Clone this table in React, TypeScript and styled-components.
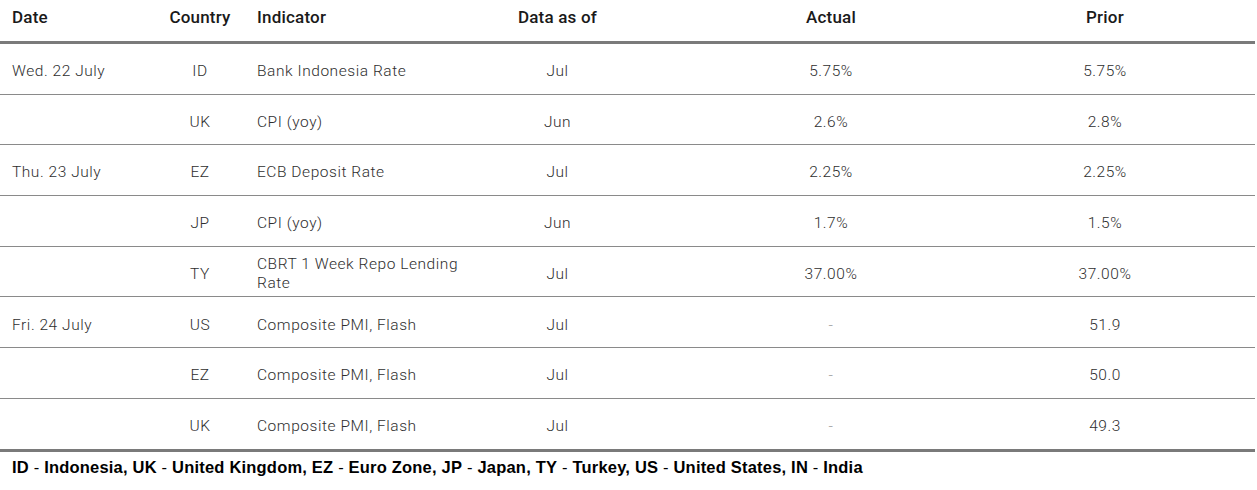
import styled, { createGlobalStyle } from 'styled-components'

const GlobalStyle = createGlobalStyle`
  body {
    margin: 0;
    background: #fff;
    font-family: Roboto, 'Liberation Sans', Arial, sans-serif;
  }
`

type Row = {
  date?: string
  country: string
  indicator: string
  asOf: string
  actual: string
  prior: string
}

const rows: Row[] = [
  { date: 'Wed. 22 July', country: 'ID', indicator: 'Bank Indonesia Rate', asOf: 'Jul', actual: '5.75%', prior: '5.75%' },
  { country: 'UK', indicator: 'CPI (yoy)', asOf: 'Jun', actual: '2.6%', prior: '2.8%' },
  { date: 'Thu. 23 July', country: 'EZ', indicator: 'ECB Deposit Rate', asOf: 'Jul', actual: '2.25%', prior: '2.25%' },
  { country: 'JP', indicator: 'CPI (yoy)', asOf: 'Jun', actual: '1.7%', prior: '1.5%' },
  { country: 'TY', indicator: 'CBRT 1 Week Repo Lending Rate', asOf: 'Jul', actual: '37.00%', prior: '37.00%' },
  { date: 'Fri. 24 July', country: 'US', indicator: 'Composite PMI, Flash', asOf: 'Jul', actual: '-', prior: '51.9' },
  { country: 'EZ', indicator: 'Composite PMI, Flash', asOf: 'Jul', actual: '-', prior: '50.0' },
  { country: 'UK', indicator: 'Composite PMI, Flash', asOf: 'Jul', actual: '-', prior: '49.3' },
]

const legend: [string, string][] = [
  ['ID', 'Indonesia'],
  ['UK', 'United Kingdom'],
  ['EZ', 'Euro Zone'],
  ['JP', 'Japan'],
  ['TY', 'Turkey'],
  ['US', 'United States'],
  ['IN', 'India'],
]

export default function App() {
  return (
    <>
      <GlobalStyle />
      <Wrapper>
        <Table>
          <colgroup>
            <col style={{ width: 155 }} />
            <col style={{ width: 90 }} />
            <col style={{ width: 225 }} />
            <col style={{ width: 175 }} />
            <col style={{ width: 372 }} />
            <col />
          </colgroup>
          <thead>
            <tr>
              <Th $align="left">Date</Th>
              <Th>Country</Th>
              <Th $align="left">Indicator</Th>
              <Th>Data as of</Th>
              <Th>Actual</Th>
              <Th $last>Prior</Th>
            </tr>
          </thead>
          <tbody>
            {rows.map((r, i) => (
              <Tr key={i}>
                <Td $align="left">{r.date}</Td>
                <Td>{r.country}</Td>
                <Td $align="left">{r.indicator}</Td>
                <Td>{r.asOf}</Td>
                <Td $muted={r.actual === '-'}>{r.actual}</Td>
                <Td $last>{r.prior}</Td>
              </Tr>
            ))}
          </tbody>
        </Table>
        <Legend>
          {legend.map(([code, name], i) => (
            <span key={code}>
              {code}
              <Dash> - </Dash>
              {name}
              {i < legend.length - 1 ? ', ' : ''}
            </span>
          ))}
        </Legend>
      </Wrapper>
    </>
  )
}

const Wrapper = styled.div`
  width: 1255px;
`

const Table = styled.table`
  width: 100%;
  border-collapse: collapse;
  table-layout: fixed;
`

const Th = styled.th<{ $align?: 'left' | 'center'; $last?: boolean }>`
  height: 33px;
  padding: 0 0 8px ${(p) => (p.$align === 'left' ? '12px' : '0')};
  padding-right: ${(p) => (p.$last ? '62px' : '0')};
  text-align: ${(p) => p.$align ?? 'center'};
  font-size: 17px;
  font-weight: 500;
  letter-spacing: 0.2px;
  line-height: 20px;
  color: #1a1a1a;
  border-bottom: 3px solid #7a7a7a;
  vertical-align: middle;
`

const Tr = styled.tr`
  &:last-child td {
    border-bottom: none;
  }
`

const Td = styled.td<{ $align?: 'left' | 'center'; $last?: boolean; $muted?: boolean }>`
  height: 44.2px;
  padding: 5.5px 0 0 ${(p) => (p.$align === 'left' ? '12px' : '0')};
  padding-right: ${(p) => (p.$last ? '62px' : '0')};
  text-align: ${(p) => p.$align ?? 'center'};
  font-size: 15.5px;
  font-weight: 300;
  letter-spacing: 0.55px;
  line-height: 19px;
  color: ${(p) => (p.$muted ? '#9a9a9a' : '#2e2e2e')};
  border-bottom: 1px solid #8a8a8a;
  vertical-align: middle;
`

const Legend = styled.div`
  border-top: 3px solid #7a7a7a;
  padding: 5px 0 0 12px;
  font-family: 'Liberation Sans', Arial, sans-serif;
  font-size: 16.5px;
  font-weight: 700;
  letter-spacing: 0.2px;
  color: #000;
  line-height: 20px;
`

const Dash = styled.span`
  font-weight: 400;
`
